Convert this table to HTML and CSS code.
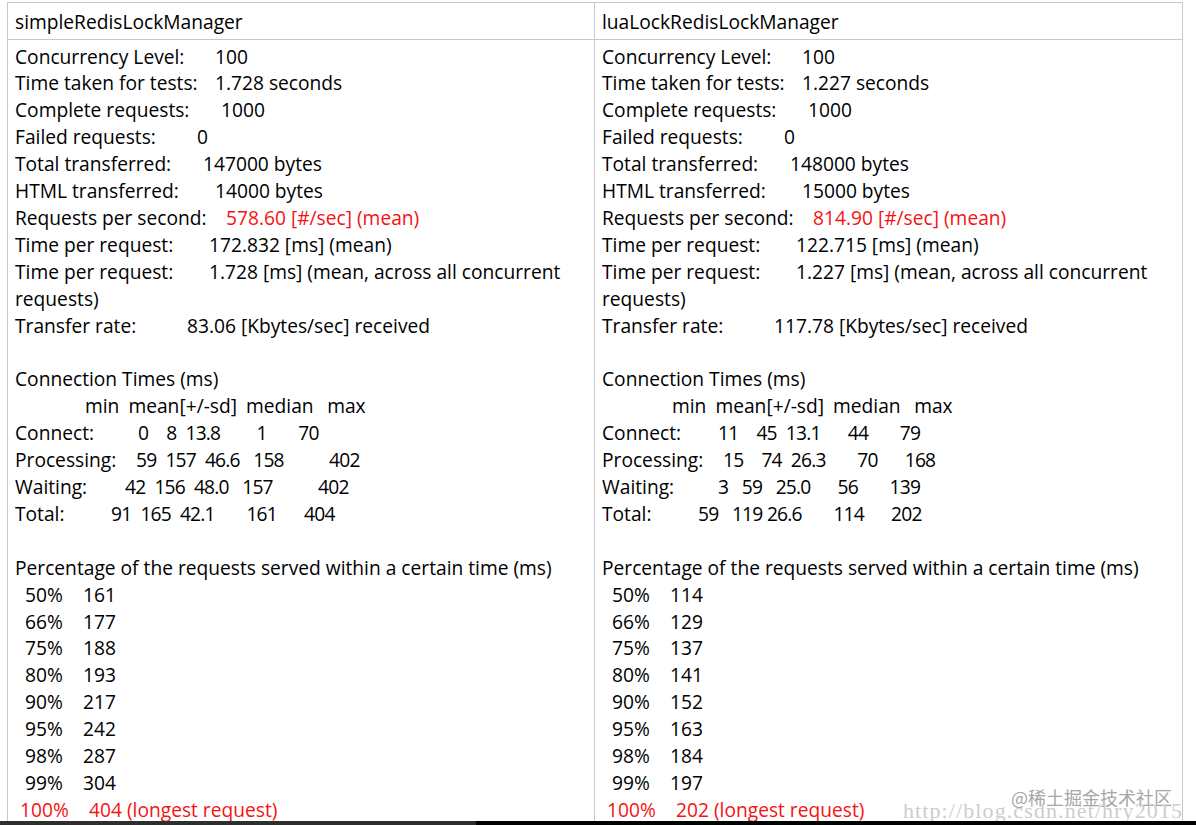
FILE: index.html
```html
<!DOCTYPE html>
<html>
<head>
<meta charset="utf-8">
<link rel="stylesheet" href="styles.css">
</head>
<body>
<div class="page">
  <div class="sheet">
    <div class="cell head">simpleRedisLockManager</div>
    <div class="cell head">luaLockRedisLockManager</div>

    <div class="cell body">
      <div class="ln"><span class="lb w-conc">Concurrency Level:</span>100</div>
      <div class="ln"><span class="lb w-taken">Time taken for tests:</span>1.728 seconds</div>
      <div class="ln"><span class="lb w-comp">Complete requests:</span>1000</div>
      <div class="ln"><span class="lb w-fail">Failed requests:</span>0</div>
      <div class="ln"><span class="lb w-total">Total transferred:</span>147000 bytes</div>
      <div class="ln"><span class="lb w-html">HTML transferred:</span>14000 bytes</div>
      <div class="ln"><span class="lb w-rps">Requests per second:</span><span class="red">578.60 [#/sec] (mean)</span></div>
      <div class="ln"><span class="lb w-tpr">Time per request:</span>172.832 [ms] (mean)</div>
      <div class="ln wrap"><span class="lb w-tpr">Time per request:</span>1.728 [ms] (mean, across all concurrent requests)</div>
      <div class="ln"><span class="lb w-rate">Transfer rate:</span>83.06 [Kbytes/sec] received</div>
      <div class="ln blank"></div>
      <div class="ln">Connection Times (ms)</div>
      <div class="ln pre"><span class="lb c-head"></span>min  mean[+/-sd]  median   max</div>
      <div class="ln pre num"><span class="lb c123">Connect:</span>0    8  13.8        1       70</div>
      <div class="ln pre num"><span class="lb c121">Processing:</span>59  157  46.6   158          402</div>
      <div class="ln pre num"><span class="lb c110">Waiting:</span>42  156  48.0   157          402</div>
      <div class="ln pre num"><span class="lb c96">Total:</span>91  165  42.1       161      404</div>
      <div class="ln blank"></div>
      <div class="ln">Percentage of the requests served within a certain time (ms)</div>
      <div class="ln"><span class="pc">50%</span>161</div>
      <div class="ln"><span class="pc">66%</span>177</div>
      <div class="ln"><span class="pc">75%</span>188</div>
      <div class="ln"><span class="pc">80%</span>193</div>
      <div class="ln"><span class="pc">90%</span>217</div>
      <div class="ln"><span class="pc">95%</span>242</div>
      <div class="ln"><span class="pc">98%</span>287</div>
      <div class="ln"><span class="pc">99%</span>304</div>
      <div class="ln red"><span class="pc full">100%</span>404 (longest request)</div>
    </div>

    <div class="cell body">
      <div class="ln"><span class="lb w-conc">Concurrency Level:</span>100</div>
      <div class="ln"><span class="lb w-taken">Time taken for tests:</span>1.227 seconds</div>
      <div class="ln"><span class="lb w-comp">Complete requests:</span>1000</div>
      <div class="ln"><span class="lb w-fail">Failed requests:</span>0</div>
      <div class="ln"><span class="lb w-total">Total transferred:</span>148000 bytes</div>
      <div class="ln"><span class="lb w-html">HTML transferred:</span>15000 bytes</div>
      <div class="ln"><span class="lb w-rps">Requests per second:</span><span class="red">814.90 [#/sec] (mean)</span></div>
      <div class="ln"><span class="lb w-tpr">Time per request:</span>122.715 [ms] (mean)</div>
      <div class="ln wrap"><span class="lb w-tpr">Time per request:</span>1.227 [ms] (mean, across all concurrent requests)</div>
      <div class="ln"><span class="lb w-rate">Transfer rate:</span>117.78 [Kbytes/sec] received</div>
      <div class="ln blank"></div>
      <div class="ln">Connection Times (ms)</div>
      <div class="ln pre"><span class="lb c-head"></span>min  mean[+/-sd]  median   max</div>
      <div class="ln pre num"><span class="lb c116">Connect:</span>11    45  13.1      44       79</div>
      <div class="ln pre num"><span class="lb c121">Processing:</span>15    74  26.3       70      168</div>
      <div class="ln pre num"><span class="lb c116">Waiting:</span>3   59   25.0      56       139</div>
      <div class="ln pre num"><span class="lb c96">Total:</span>59   119 26.6       114      202</div>
      <div class="ln blank"></div>
      <div class="ln">Percentage of the requests served within a certain time (ms)</div>
      <div class="ln"><span class="pc">50%</span>114</div>
      <div class="ln"><span class="pc">66%</span>129</div>
      <div class="ln"><span class="pc">75%</span>137</div>
      <div class="ln"><span class="pc">80%</span>141</div>
      <div class="ln"><span class="pc">90%</span>152</div>
      <div class="ln"><span class="pc">95%</span>163</div>
      <div class="ln"><span class="pc">98%</span>184</div>
      <div class="ln"><span class="pc">99%</span>197</div>
      <div class="ln red"><span class="pc full">100%</span>202 (longest request)</div>
    </div>
  </div>
  <div class="wm-cn">@稀土掘金技术社区</div>
  <div class="wm-url">http://blog.csdn.net/hry2015</div>
</div>
<div class="bottombar"><div class="bar-gray"></div><div class="bar-black"></div></div>
</body>
</html>
```

FILE: styles.css
```css
html, body {
  margin: 0;
  padding: 0;
  background: #ffffff;
}
body {
  width: 1196px;
  height: 825px;
  overflow: hidden;
  font-family: "Open Sans", "Noto Sans", sans-serif;
  font-size: 19.2px;
  color: #000;
}
.page {
  position: relative;
  height: 821px;
  overflow: hidden;
  padding: 2px 0 0 7px;
  box-sizing: border-box;
}
.sheet {
  display: grid;
  grid-template-columns: 587px 588px;
  grid-template-rows: 37px 900px;
  border-left: 1px solid #c8c8c8;
  border-top: 1px solid #c8c8c8;
  width: max-content;
}
.cell {
  border-right: 1px solid #c8c8c8;
  border-bottom: 1px solid #c8c8c8;
  box-sizing: border-box;
  padding: 0 4px 0 7px;
}
.head {
  display: flex;
  align-items: center;
  padding-top: 1px;
}
.body {
  padding-top: 3.5px;
}
.ln {
  line-height: 26.9px;
  min-height: 26.9px;
  white-space: nowrap;
}
.ln.wrap {
  white-space: normal;
}
.pre {
  white-space: pre;
  word-spacing: -0.46px;
}
.pre.num {
  letter-spacing: -0.8px;
  word-spacing: 0.34px;
}
.lb {
  display: inline-block;
  white-space: nowrap;
  word-spacing: normal;
  letter-spacing: normal;
}
.red { color: #f51212; }
.w-conc { width: 200px; }
.w-taken { width: 200px; }
.w-comp { width: 206px; }
.w-fail { width: 182px; }
.w-total { width: 188px; }
.w-html { width: 200px; }
.w-rps { width: 211px; }
.w-tpr { width: 194px; }
.w-rate { width: 172px; }
.c-head { width: 70px; }
.c123 { width: 123px; }
.c121 { width: 121px; }
.c116 { width: 116px; }
.c110 { width: 110px; }
.c96 { width: 96px; }
.pc {
  display: inline-block;
  box-sizing: border-box;
  width: 68px;
  padding-left: 10px;
}
.pc.full {
  width: 74px;
  padding-left: 5px;
}
.wm-cn {
  position: absolute;
  left: 1011px;
  top: 786px;
  font-family: "Noto Sans CJK SC", "Noto Sans", sans-serif;
  font-size: 18px;
  line-height: 22px;
  color: #a6a6a6;
  text-shadow: 0 0 2px #fff, 0 0 2px #fff;
}
.wm-url {
  position: absolute;
  left: 903px;
  top: 798px;
  font-family: "Liberation Serif", serif;
  font-size: 22px;
  line-height: 26px;
  letter-spacing: 1.1px;
  color: #cdcdcd;
}
.bottombar {
  display: flex;
  height: 4px;
}
.bar-gray {
  width: 476px;
  background: #2e2e2e;
}
.bar-black {
  flex: 1;
  background: #000;
}
```
